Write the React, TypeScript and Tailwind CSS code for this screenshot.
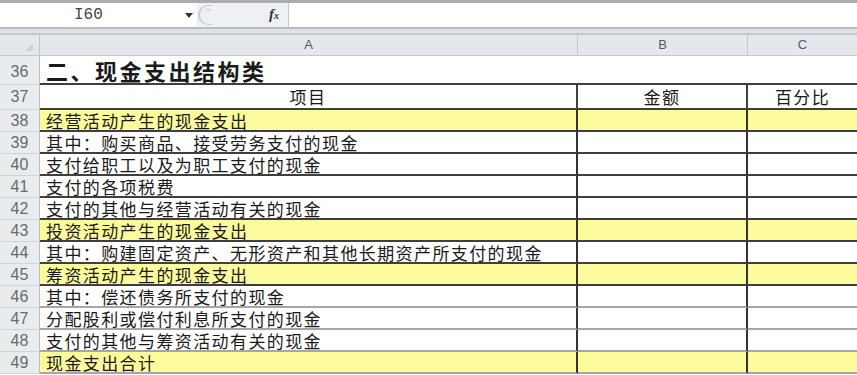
import React from "react";

type Row = { n: number; text: string; yellow?: boolean; line: "dark" | "gray" };

const rows: Row[] = [
  { n: 38, text: "经营活动产生的现金支出", yellow: true, line: "dark" },
  { n: 39, text: "其中：购买商品、接受劳务支付的现金", line: "dark" },
  { n: 40, text: "支付给职工以及为职工支付的现金", line: "dark" },
  { n: 41, text: "支付的各项税费", line: "dark" },
  { n: 42, text: "支付的其他与经营活动有关的现金", line: "dark" },
  { n: 43, text: "投资活动产生的现金支出", yellow: true, line: "dark" },
  { n: 44, text: "其中：购建固定资产、无形资产和其他长期资产所支付的现金", line: "dark" },
  { n: 45, text: "筹资活动产生的现金支出", yellow: true, line: "dark" },
  { n: 46, text: "其中：偿还债务所支付的现金", line: "gray" },
  { n: 47, text: "分配股利或偿付利息所支付的现金", line: "gray" },
  { n: 48, text: "支付的其他与筹资活动有关的现金", line: "gray" },
  { n: 49, text: "现金支出合计", yellow: true, line: "gray" },
];

const cjk = { fontFamily: '"Noto Sans CJK SC", "Noto Sans", sans-serif' };
const num = { fontFamily: '"Liberation Sans", Arial, sans-serif' };

function RowHeader({ n }: { n: number }) {
  return (
    <div
      className="w-[40px] shrink-0 h-full bg-[#e9ecef] border-r border-b border-r-[#b9bdc3] border-b-[#cfd3d8] flex items-center justify-center text-[16px] leading-[18px] text-[#6a6a6a]"
      style={num}
    >
      {n}
    </div>
  );
}

export default function App() {
  return (
    <div className="w-[857px] h-[375px] overflow-hidden bg-white relative" style={cjk}>
      {/* top edge */}
      <div className="h-[3px] bg-[#a9adb2]" />
      {/* formula bar */}
      <div className="h-[24px] flex items-stretch bg-white">
        <div className="w-[180px] flex items-center pl-[74px] text-[16px] leading-[18px] text-[#444]" style={{ fontFamily: '"Liberation Mono", monospace' }}>
          I60
        </div>
        <div className="w-[17px] flex items-center justify-center">
          <svg width="8" height="5" viewBox="0 0 8 5">
            <path d="M0 0 L8 0 L4 5 Z" fill="#333" />
          </svg>
        </div>
        <div className="w-[92px] bg-[#eef0f2] border-r border-[#c4c8cd] relative flex items-center justify-end pr-[9px]">
          <div className="absolute left-[1px] top-[2px] w-[14px] h-[20px] rounded-l-full border-l-2 border-t border-b border-[#c9cdd2]" />
          <div className="absolute left-[9px] top-[6px] w-[5px] h-[3px] rounded-t-full border-t border-[#c0c4c8]" />
          <span className="italic font-bold text-[15px] leading-[18px] text-[#333]" style={{ fontFamily: '"Liberation Serif", serif' }}>
            f<span className="text-[10px]">x</span>
          </span>
        </div>
        <div className="flex-1 bg-white" />
      </div>
      {/* separator */}
      <div className="h-[8px] bg-[#dfe2e6] border-t-2 border-b-2 border-t-[#b8bcc1] border-b-[#c3c7cc]" />
      {/* column header */}
      <div className="h-[21px] flex bg-[#e4e7eb] border-b border-[#c4c8cd] text-[13px] leading-[16px] text-[#5a5a5a]" style={num}>
        <div className="w-[40px] border-r border-[#c4c8cd] relative">
          <svg className="absolute right-[6px] bottom-[4px]" width="8" height="8" viewBox="0 0 8 8">
            <path d="M8 0 L8 8 L0 8 Z" fill="#d0d3d7" />
          </svg>
        </div>
        <div className="w-[538px] border-r border-[#c4c8cd] flex items-center justify-center">A</div>
        <div className="w-[170px] border-r border-[#c4c8cd] flex items-center justify-center">B</div>
        <div className="flex-1 flex items-center justify-center">C</div>
      </div>
      {/* row 36 */}
      <div className="h-[29px] flex">
        <div className="w-[40px] shrink-0 bg-[#e9ecef] border-r border-b border-r-[#b9bdc3] border-b-[#cfd3d8] flex items-end justify-center pb-[3px] text-[16px] leading-[18px] text-[#6a6a6a]" style={num}>
          36
        </div>
        <div className="flex-1 flex items-center pl-[6px] border-b-2 border-[#3f3f3f] text-[22px] leading-[26px] font-bold tracking-[2.5px] text-[#1a1a1a]">
          二、现金支出结构类
        </div>
      </div>
      {/* row 37 */}
      <div className="h-[25px] flex">
        <div className="w-[40px] shrink-0 bg-[#e9ecef] border-r border-b border-r-[#b9bdc3] border-b-[#cfd3d8] flex items-center justify-center text-[16px] leading-[18px] text-[#6a6a6a]" style={num}>
          37
        </div>
        <div className="w-[538px] border-b-2 border-r-2 border-[#3f3f3f] flex items-center justify-center text-[17px] leading-[20px] tracking-[1.4px] text-[#1a1a1a]">项目</div>
        <div className="w-[170px] border-b-2 border-r-2 border-[#3f3f3f] flex items-center justify-center text-[17px] leading-[20px] tracking-[1.4px] text-[#1a1a1a]">金额</div>
        <div className="flex-1 border-b-2 border-[#3f3f3f] flex items-center justify-center text-[17px] leading-[20px] tracking-[1.4px] text-[#1a1a1a]">百分比</div>
      </div>
      {rows.map((r) => {
        const bg = r.yellow ? "bg-[#fdfc9c]" : "bg-white";
        const bl = r.line === "dark" ? "border-b-[#3f3f3f]" : "border-b-[#a6a6a6]";
        return (
          <div key={r.n} className="h-[22px] flex">
            <RowHeader n={r.n} />
            <div className={`w-[538px] ${bg} border-b-2 ${bl} border-r-2 border-r-[#333] flex items-center pl-[6px] text-[17px] leading-[19px] tracking-[1.4px] text-[#1a1a1a] whitespace-nowrap`}>
              {r.text}
            </div>
            <div className={`w-[170px] ${bg} border-b-2 ${bl} border-r-2 border-r-[#333]`} />
            <div className={`flex-1 ${bg} border-b-2 ${bl}`} />
          </div>
        );
      })}
    </div>
  );
}
